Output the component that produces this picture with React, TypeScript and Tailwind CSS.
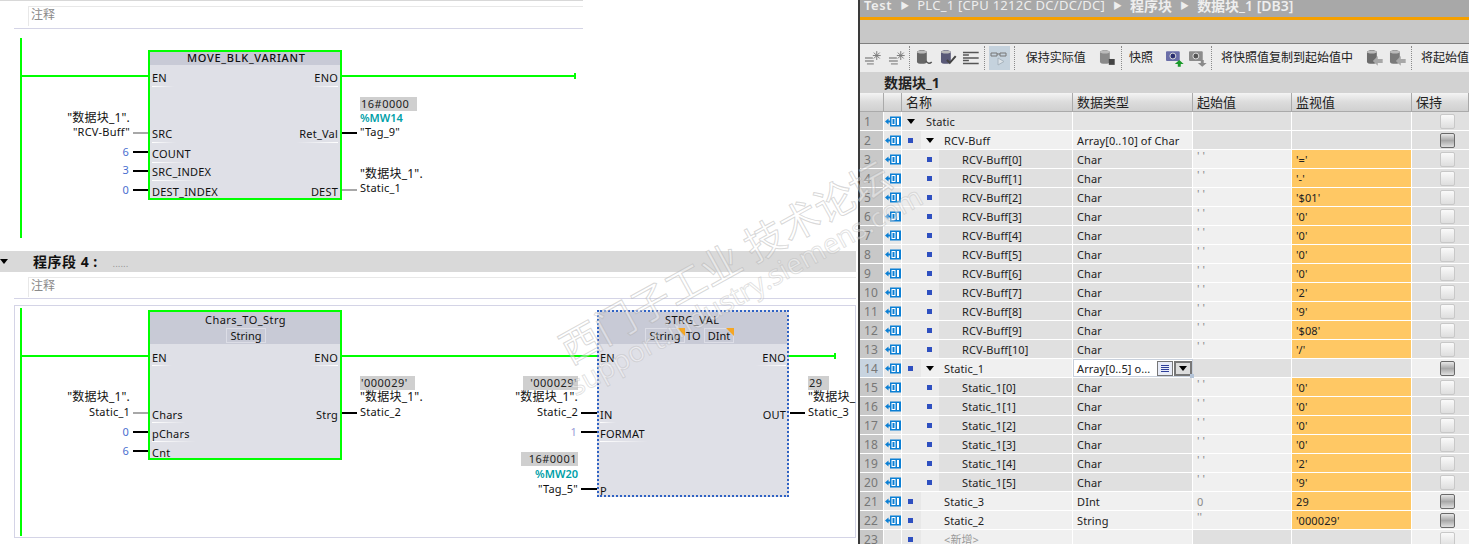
import React from 'react'

type P = { x: number; y: number; r?: boolean; c?: string; color?: string; cjk?: boolean; children: React.ReactNode }

// diagram text, x is the left edge (or right edge when r), y is the vertical centre
const Lbl = ({ x, y, r, c = 'tracking-[0.2px]', color = 'text-[#111]', cjk, children }: P) => (
  <span
    className={`absolute whitespace-nowrap leading-none ${cjk ? 'text-[12px]' : 'text-[11px]'} ${color} ${c}`}
    style={{ left: x, top: cjk ? y : y - 1, transform: r ? 'translate(-100%,-50%)' : 'translateY(-50%)' }}
  >
    {children}
  </span>
)

const Wire = ({ x, y, w, gray }: { x: number; y: number; w: number; gray?: boolean }) => (
  <div className={`absolute h-[2px] ${gray ? 'bg-[#a8a8a8]' : 'bg-black'}`} style={{ left: x, top: y, width: w }} />
)

const Green = ({ x, y, w }: { x: number; y: number; w: number }) => (
  <div className="absolute h-[2px] bg-[#00ff00]" style={{ left: x, top: y, width: w }} />
)

const Pin = ({ x, y, w, r, u = 8, children }: { x: number; y: number; w: number; r?: boolean; u?: number; children: React.ReactNode }) => (
  <>
    <Lbl x={x} y={y} r={r}>{children}</Lbl>
    <div
      className={`absolute h-px ${r ? 'bg-linear-to-l' : 'bg-linear-to-r'} from-white to-transparent`}
      style={{ left: r ? x - w : x, top: y + u, width: w }}
    />
  </>
)

const Val = ({ x, y, w, left, children }: { x: number; y: number; w: number; left?: boolean; children: React.ReactNode }) => (
  <div
    className={`absolute h-[14px] bg-[#cfcfcf] text-[11px] leading-[13px] text-[#222] tracking-[0.5px] ${left ? 'text-left pl-[1px]' : 'text-right pr-[1px]'}`}
    style={{ left: x, top: y, width: w }}
  >
    {children}
  </div>
)

const Block = ({ x, y, w, h, head, blue }: { x: number; y: number; w: number; h: number; head: number; blue?: boolean }) => (
  <div
    className={`absolute flex flex-col bg-[#dfe0e7] ${blue ? 'border-2 border-dotted border-[#2f62c4]' : 'border-2 border-[#00ff00]'}`}
    style={{ left: x, top: y, width: w, height: h }}
  >
    <div className="bg-[#c8cad6]" style={{ height: head }} />
  </div>
)

const Comment = () => (
  <div className="ml-[28px] h-[20px] border-l border-[#e8e8e8] border-t pl-[2px] text-[12px] leading-[15px] text-[#8a8a8a]">注释</div>
)

const Triangle = ({ c = '' }: { c?: string }) => (
  <span className={`inline-block w-0 h-0 border-l-[4px] border-r-[4px] border-t-[5px] border-l-transparent border-r-transparent border-t-black ${c}`} />
)

const Diagram1 = () => (
  <div className="relative h-[222px]">
    <div className="absolute left-0 top-[-29px]">
      <div className="absolute left-[20px] top-[38px] w-[2px] h-[200px] bg-[#00ff00]" />
      <Green x={22} y={75} w={126} />
      <Green x={342} y={75} w={233} />
      <div className="absolute left-[574px] top-[73px] w-[2px] h-[6px] bg-[#00ff00]" />
      <Block x={148} y={50} w={194} h={150} head={13} />
      <Lbl x={187} y={58} c="tracking-[0.7px] font-medium">MOVE_BLK_VARIANT</Lbl>
      <Pin x={152} y={78} w={22}>EN</Pin>
      <Pin x={338} y={78} w={28} r>ENO</Pin>
      <Pin x={152} y={134} w={24}>SRC</Pin>
      <Pin x={152} y={154} w={36}>COUNT</Pin>
      <Pin x={152} y={172} w={50}>SRC_INDEX</Pin>
      <Lbl x={152} y={192}>DEST_INDEX</Lbl>
      <Pin x={338} y={134} w={42} r>Ret_Val</Pin>
      <Lbl x={338} y={192} r>DEST</Lbl>
      <Lbl x={130} y={118} r cjk>"数据块_1".</Lbl>
      <Lbl x={130} y={132} r>"RCV-Buff"</Lbl>
      <Wire x={133} y={132} w={15} gray />
      <Lbl x={129} y={152} r color="text-[#4a6fd0]">6</Lbl>
      <Wire x={133} y={151} w={15} />
      <Lbl x={129} y={170} r color="text-[#4a6fd0]">3</Lbl>
      <Wire x={133} y={170} w={15} />
      <Lbl x={129} y={190} r color="text-[#4a6fd0]">0</Lbl>
      <Wire x={133} y={189} w={15} />
      <Val x={360} y={97} w={57} left>16#0000</Val>
      <Lbl x={360} y={118} c="font-semibold" color="text-[#00a0a8]">%MW14</Lbl>
      <Lbl x={360} y={132}>"Tag_9"</Lbl>
      <Wire x={342} y={132} w={15} />
      <Lbl x={360} y={174} cjk>"数据块_1".</Lbl>
      <Lbl x={360} y={188}>Static_1</Lbl>
      <Wire x={342} y={189} w={15} gray />
    </div>
  </div>
)

const Diagram2 = () => (
  <div className="relative h-[244px]">
    <div className="absolute left-[14px] top-[6px] w-[842px] h-[233px] border border-[#d4d4e6]" />
    <div className="absolute left-0 top-[-300px]">
      <div className="absolute left-[20px] top-[309px] w-[2px] h-[228px] bg-[#00ff00]" />
      <Green x={22} y={356} w={126} />
      <Green x={342} y={356} w={255} />
      <Green x={789} y={356} w={46} />
      <div className="absolute left-[834px] top-[354px] w-[2px] h-[6px] bg-[#00ff00]" />

      <Block x={148} y={311} w={194} h={150} head={32} />
      <Lbl x={205} y={321} c="tracking-[0.45px]">Chars_TO_Strg</Lbl>
      <div className="absolute left-[226px] top-[329px] w-[40px] h-[15px] border border-[#dcdde6] text-center text-[11px] leading-[13px] text-[#111]">String</div>
      <Pin x={152} y={359} w={20} u={7}>EN</Pin>
      <Pin x={338} y={359} w={28} u={7} r>ENO</Pin>
      <Pin x={152} y={416} w={34} u={7}>Chars</Pin>
      <Pin x={152} y={435} w={44} u={7}>pChars</Pin>
      <Lbl x={152} y={454}>Cnt</Lbl>
      <Lbl x={338} y={416} r>Strg</Lbl>
      <Lbl x={130} y={398} r cjk>"数据块_1".</Lbl>
      <Lbl x={130} y={413} r>Static_1</Lbl>
      <Wire x={133} y={413} w={15} gray />
      <Lbl x={129} y={433} r color="text-[#4a6fd0]">0</Lbl>
      <Wire x={133} y={432} w={15} />
      <Lbl x={129} y={452} r color="text-[#4a6fd0]">6</Lbl>
      <Wire x={133} y={451} w={15} />
      <Val x={360} y={377} w={55} left>'000029'</Val>
      <Lbl x={360} y={398} cjk>"数据块_1".</Lbl>
      <Lbl x={360} y={413}>Static_2</Lbl>
      <Wire x={342} y={413} w={15} />

      <Block x={597} y={311} w={192} h={187} head={32} blue />
      <Lbl x={665} y={321} c="tracking-[0.45px]">STRG_VAL</Lbl>
      <div className="absolute left-[645px] top-[329px] w-[40px] h-[15px] border border-[#dcdde6] text-center text-[11px] leading-[13px] text-[#111]">String</div>
      <div className="absolute left-[677px] top-[329px] w-0 h-0 border-l-[8px] border-t-[8px] border-l-transparent border-t-[#f5a623]" />
      <Lbl x={686} y={337}>TO</Lbl>
      <div className="absolute left-[704px] top-[329px] w-[30px] h-[15px] border border-[#dcdde6] text-center text-[11px] leading-[13px] text-[#111]">DInt</div>
      <div className="absolute left-[726px] top-[329px] w-0 h-0 border-l-[8px] border-t-[8px] border-l-transparent border-t-[#f5a623]" />
      <Pin x={600} y={359} w={16} u={7}>EN</Pin>
      <Pin x={786} y={359} w={30} u={7} r>ENO</Pin>
      <Pin x={600} y={416} w={16} u={7}>IN</Pin>
      <Pin x={600} y={435} w={48} u={7}>FORMAT</Pin>
      <Lbl x={600} y={492}>P</Lbl>
      <Lbl x={786} y={416} r>OUT</Lbl>
      <Val x={523} y={377} w={55}>'000029'</Val>
      <Lbl x={578} y={398} r cjk>"数据块_1".</Lbl>
      <Lbl x={578} y={413} r>Static_2</Lbl>
      <Wire x={581} y={413} w={16} />
      <Lbl x={577} y={433} r color="text-[#9a9ad8]">1</Lbl>
      <Wire x={581} y={432} w={16} />
      <Val x={521} y={453} w={57}>16#0001</Val>
      <Lbl x={578} y={475} r c="font-semibold" color="text-[#00a0a8]">%MW20</Lbl>
      <Lbl x={578} y={490} r>"Tag_5"</Lbl>
      <Wire x={581} y={489} w={16} />
      <Val x={808} y={377} w={21} left>29</Val>
      <Lbl x={808} y={398} cjk>"数据块_</Lbl>
      <Lbl x={808} y={413}>Static_3</Lbl>
      <Wire x={790} y={413} w={15} />
    </div>
  </div>
)

const LeftPanel = () => (
  <div className="w-[858px] shrink-0 h-full overflow-hidden bg-white">
    <div className="w-[583px] h-[1px] bg-[#d8d8d8]" />
    <div className="ml-[14px] w-[569px] h-[28px] pt-[5px] border-b border-[#d4d4e6]">
      <div className="-ml-[14px]"><Comment /></div>
    </div>
    <Diagram1 />
    <div className="w-[856px] h-[21px] bg-[#d9d9d9] flex items-center">
      <Triangle />
      <span className="ml-[25px] text-[14px] font-bold text-[#111] leading-none tracking-[0.5px]">程序段 4 :</span>
      <span className="ml-[15px] mt-[5px] text-[8px] text-[#888] leading-none tracking-[0.5px]">......</span>
    </div>
    <div className="ml-[14px] w-[842px] h-[27px] pt-[5px] border-b border-[#d4d4e6]">
      <div className="-ml-[14px]"><Comment /></div>
    </div>
    <Diagram2 />
  </div>
)

const Dots = () => <div className="w-0 h-[24px] border-l border-dotted border-[#8a8a8a] mx-[4px]" />

const Sno = () => (
  <svg width="18" height="18" viewBox="0 0 18 18">
    <path d="M1 9h8M1 12h9M3 15h7" stroke="#a8a8a8" strokeWidth="2" />
    <path d="M13 2v9M9 6.500h8M10 3.500l6 6M16 3.500l-6 6" stroke="#7a7a7a" strokeWidth="1" />
  </svg>
)

const Db = ({ children, fill = '#666' }: { children?: React.ReactNode; fill?: string }) => (
  <svg width="18" height="18" viewBox="0 0 18 18">
    <path d="M1 3c0-2.600 10-2.600 10 0v10c0 2.600-10 2.600-10 0z" fill={fill} />
    <ellipse cx="6" cy="3" rx="5" ry="1.500" fill="#bbb" />
    {children}
  </svg>
)

const Cam = ({ dim, arrow }: { dim?: boolean; arrow: string }) => (
  <svg width="18" height="18" viewBox="0 0 18 18">
    <rect x="0" y="2" width="14" height="10" rx="1" fill={dim ? '#8c8c8c' : '#6a6ea8'} />
    <circle cx="7" cy="7" r="3" fill={dim ? '#555' : '#2a2f70'} stroke="#ddd" />
    <path d="M12 11h3v3h3l-4.500 4L9 14h3z" fill={arrow} transform={dim ? undefined : 'rotate(180 13.500 14.500)'} />
  </svg>
)

const Toolbar = () => (
  <div className="h-[28px] bg-[#ececec] flex items-center pl-[4px] text-[12px] text-[#222] whitespace-nowrap">
    <Sno />
    <span className="w-[6px]" />
    <Sno />
    <Dots />
    <span className="w-[2px]" />
    <Db><path d="M10 12c2 3 4 3 6 1" stroke="#555" strokeWidth="1.500" fill="none" /></Db>
    <span className="w-[6px]" />
    <Db fill="#5a5a78"><path d="M7 11l3 3 6-7" stroke="#444" strokeWidth="2" fill="none" /></Db>
    <span className="w-[5px]" />
    <svg width="18" height="18" viewBox="0 0 18 18">
      <path d="M1 3.500h16M1 9h16M1 14.500h16M1 6h6M1 11.500h6" stroke="#555" strokeWidth="1.500" />
    </svg>
    <Dots />
    <div className="w-[21px] h-[24px] bg-[#c5d2dd] flex items-center justify-center">
      <svg width="18" height="18" viewBox="0 0 18 18">
        <path d="M1 4h6v3H1zM10 4h6v3h-6zM7 5h3" stroke="#777" fill="none" />
        <path d="M8 9v7l6-3.500z" fill="#dde3e8" stroke="#a8b4be" />
      </svg>
    </div>
    <Dots />
    <span className="ml-[7px]">保持实际值</span>
    <span className="w-[14px]" />
    <Db fill="#8a8a8a"><rect x="10" y="10" width="6" height="6" fill="#444" /></Db>
    <Dots />
    <span className="ml-[3px]">快照</span>
    <span className="w-[13px]" />
    <Cam arrow="#1a9a2a" />
    <span className="w-[6px]" />
    <Cam dim arrow="#8a8a8a" />
    <Dots />
    <span className="ml-[5px]">将快照值复制到起始值中</span>
    <span className="w-[13px]" />
    <Db fill="#6c6c6c"><path d="M17 10h-5V7l-5 5 5 5v-3h5z" fill="#a8a8a8" /></Db>
    <span className="w-[6px]" />
    <Db fill="#7a7a7a"><path d="M17 10h-5V7l-5 5 5 5v-3h5z" fill="#a8a8a8" /></Db>
    <Dots />
    <span className="ml-[5px]">将起始值</span>
  </div>
)

const TagIcon = () => (
  <svg width="16" height="11" viewBox="0 0 16 11">
    <path d="M0 5.500L3.500 2.500V4.500H5V.5H16V10.500H5V6.500H3.500V8.500Z" fill="#0b7fd4" />
    <rect x="7" y="2.500" width="3" height="6" fill="none" stroke="#fff" />
    <rect x="12" y="2" width="2" height="7" fill="#fff" />
  </svg>
)

const Marker = () => <span className="block w-[5px] h-[5px] bg-[#2e4fc0]" />

const Check = ({ on }: { on?: boolean }) => (
  <span
    className={`block w-[15px] h-[15px] rounded-[2px] border bg-linear-to-b ${
      on ? 'border-[#6a6a6a] from-[#e8e8e8] via-[#a8a8a8] to-[#e0e0e0]' : 'border-[#c8c8c8] from-[#fafafa] to-[#dedede]'
    }`}
  />
)

type Row = { n: number; lvl: 0 | 1 | 2; arrow?: boolean; name: string; type?: string; start?: string; mon?: string; ck?: boolean }

const elems = (base: string, from: number, vals: string[]): Row[] =>
  vals.map((v, i) => ({ n: from + i, lvl: 2 as const, name: `${base}[${i}]`, type: 'Char', start: "' '", mon: v }))

const rows: Row[] = [
  { n: 1, lvl: 0, arrow: true, name: 'Static' },
  { n: 2, lvl: 1, arrow: true, name: 'RCV-Buff', type: 'Array[0..10] of Char', ck: true },
  ...elems('RCV-Buff', 3, ["'='", "'-'", "'$01'", "'0'", "'0'", "'0'", "'0'", "'2'", "'9'", "'$08'", "'/'"]),
  { n: 14, lvl: 1, arrow: true, name: 'Static_1', ck: true },
  ...elems('Static_1', 15, ["'0'", "'0'", "'0'", "'0'", "'2'", "'9'"]),
  { n: 21, lvl: 1, name: 'Static_3', type: 'DInt', start: '0', mon: '29', ck: true },
  { n: 22, lvl: 1, name: 'Static_2', type: 'String', start: "''", mon: "'000029'", ck: true },
  { n: 23, lvl: 1, name: '<新增>' },
]

const TableRow = ({ r }: { r: Row }) => {
  const light = r.n === 14 || r.n >= 21
  const typeBg = r.lvl === 2 ? 'bg-[#e0e0e0]' : r.lvl === 0 ? 'bg-[#e4e4e4]' : 'bg-[#f0f0f0]'
  return (
    <div className="flex h-[19px] border-b border-white text-[11px] text-[#222] leading-[20px] tracking-[0.1px]">
      <div className={`w-[24px] pl-[4px] text-[12px] text-[#777] border-r border-white ${r.n === 14 ? 'bg-[#c8d4e0]' : 'bg-[#c8c8c8]'}`}>{r.n}</div>
      <div className="w-[18px] bg-[#e8e8e8] border-r border-white flex items-center justify-center pl-px">
        {r.n < 23 && <TagIcon />}
      </div>
      {r.lvl === 0 && (
        <div className="w-[171px] bg-[#e4e4e4] border-r border-white flex items-center pl-[5px]">
          <Triangle />
          <span className="ml-[11px] translate-y-px">{r.name}</span>
        </div>
      )}
      {r.lvl === 1 && (
        <div className="w-[171px] bg-[#f0f0f0] border-r border-white flex items-center">
          <div className="w-[19px] h-full bg-[#e8e8e8] flex items-center pl-[6px]"><Marker /></div>
          <div className="w-[23px] pl-[5px] flex items-center">{r.arrow && <Triangle />}</div>
          <span className={`translate-y-px ${r.n === 23 ? 'text-[#999]' : ''}`}>{r.name}</span>
        </div>
      )}
      {r.lvl === 2 && (
        <div className="w-[171px] bg-[#e0e0e0] border-r border-white flex items-center">
          <div className="w-[37px] h-full bg-[#ebebeb] flex items-center pl-[25px]"><Marker /></div>
          <span className="ml-[23px] translate-y-px">{r.name}</span>
        </div>
      )}
      {r.n === 14 ? (
        <div className="relative w-[120px] bg-white border border-[#c8d0dc] flex items-center pl-[3px]">
          <span className="translate-y-px">Array[0..5] o...</span>
          <span className="absolute left-[83px] top-[1px] w-[16px] h-[15px] bg-[#e8ecf8] border border-[#777] flex flex-col justify-center items-center gap-px">
            <span className="block w-[8px] h-px bg-[#2e3f9a]" />
            <span className="block w-[8px] h-px bg-[#2e3f9a]" />
            <span className="block w-[8px] h-px bg-[#2e3f9a]" />
            <span className="block w-[8px] h-px bg-[#2e3f9a]" />
          </span>
          <span className="absolute left-[100px] top-[1px] w-[18px] h-[15px] bg-[#ddd] border-2 border-[#777] flex items-center justify-center">
            <Triangle />
          </span>
          <span className="absolute right-[-2px] bottom-[-2px] w-[4px] h-[4px] bg-[#b4c4d8]" />
        </div>
      ) : (
        <div className={`w-[120px] pl-[4px] border-r border-white ${typeBg}`}>{r.type}</div>
      )}
      <div className={`w-[99px] pl-[4px] border-r border-white text-[#8a8a8a] ${r.start ? 'bg-[#f0f0f0]' : 'bg-[#e0e0e0]'} ${r.start === '0' ? '' : 'leading-[12px]'}`}>
        {r.start}
      </div>
      <div className={`w-[120px] pl-[4px] border-r border-white ${r.mon ? 'bg-[#ffc864]' : 'bg-[#e0e0e0]'}`}>{r.mon}</div>
      <div className={`w-[57px] flex items-center justify-center pl-[14px] ${light ? 'bg-[#f0f0f0]' : 'bg-[#e0e0e0]'}`}>
        <Check on={r.ck} />
      </div>
    </div>
  )
}

const HeadCell = ({ w, children }: { w: string; children?: React.ReactNode }) => (
  <div className={`${w} h-full border-r border-[#aaa] pl-[4px] bg-linear-to-b from-[#f4f4f4] via-[#dcdcdc] to-[#d0d0d0] text-[13px] leading-[19px] text-[#222]`}>
    {children}
  </div>
)

const Sep = () => <span className="mx-[8px] text-[9px] text-[#eee]">▶</span>

const RightPanel = () => (
  <div className="flex-1 h-full overflow-hidden border-l-2 border-[#3a3a3a] flex flex-col">
    <div className="h-[17px] bg-[#a8a8a8] pl-[4px] flex items-center text-[13px] leading-none text-[#eeeeee] whitespace-nowrap overflow-hidden shrink-0">
      <span className="-translate-y-[3px] flex items-center">
        <span className="font-semibold tracking-[0.6px]">Test</span>
        <Sep />
        <span className="tracking-[0.27px]">PLC_1 [CPU 1212C DC/DC/DC]</span>
        <Sep />
        <span className="font-semibold text-[14px]">程序块</span>
        <Sep />
        <span className="font-semibold text-[14px]">数据块_1 [DB3]</span>
      </span>
    </div>
    <div className="h-[3px] bg-[#f5a000] shrink-0" />
    <div className="h-[24px] bg-[#c8c8c8] border-b border-[#808080] shrink-0" />
    <div className="shrink-0"><Toolbar /></div>
    <div className="h-[21px] bg-[#d2d2d2] pl-[24px] text-[14px] font-bold leading-[21px] text-[#222] shrink-0">数据块_1</div>
    <div className="flex h-[19px] border-b border-[#aaa] shrink-0">
      <HeadCell w="w-[24px]" />
      <HeadCell w="w-[18px]" />
      <HeadCell w="w-[171px]">名称</HeadCell>
      <HeadCell w="w-[120px]">数据类型</HeadCell>
      <HeadCell w="w-[99px]">起始值</HeadCell>
      <HeadCell w="w-[120px]">监视值</HeadCell>
      <HeadCell w="w-[57px]">保持</HeadCell>
    </div>
    {rows.map((r) => (
      <div className="shrink-0" key={r.n}>
        <TableRow r={r} />
      </div>
    ))}
  </div>
)

const Watermark = () => (
  <div className="absolute inset-0 overflow-hidden pointer-events-none">
    <div className="absolute left-[525px] top-[242px] w-[400px] flex justify-center whitespace-nowrap rotate-[-29deg] text-[40px] leading-none text-white/40 [-webkit-text-stroke:1px_rgba(170,170,170,0.45)]">
      西门子工业 技术论坛
    </div>
    <div className="absolute left-[545px] top-[276px] w-[400px] flex justify-center whitespace-nowrap rotate-[-29deg] text-[28px] leading-none text-white/40 [-webkit-text-stroke:1px_rgba(170,170,170,0.35)]">
      support.industry.siemens.com
    </div>
  </div>
)

export default function App() {
  return (
    <div className="relative w-[1469px] h-[544px] overflow-hidden flex bg-white font-['Noto_Sans','Noto_Sans_CJK_SC',sans-serif]">
      <LeftPanel />
      <RightPanel />
      <Watermark />
    </div>
  )
}
